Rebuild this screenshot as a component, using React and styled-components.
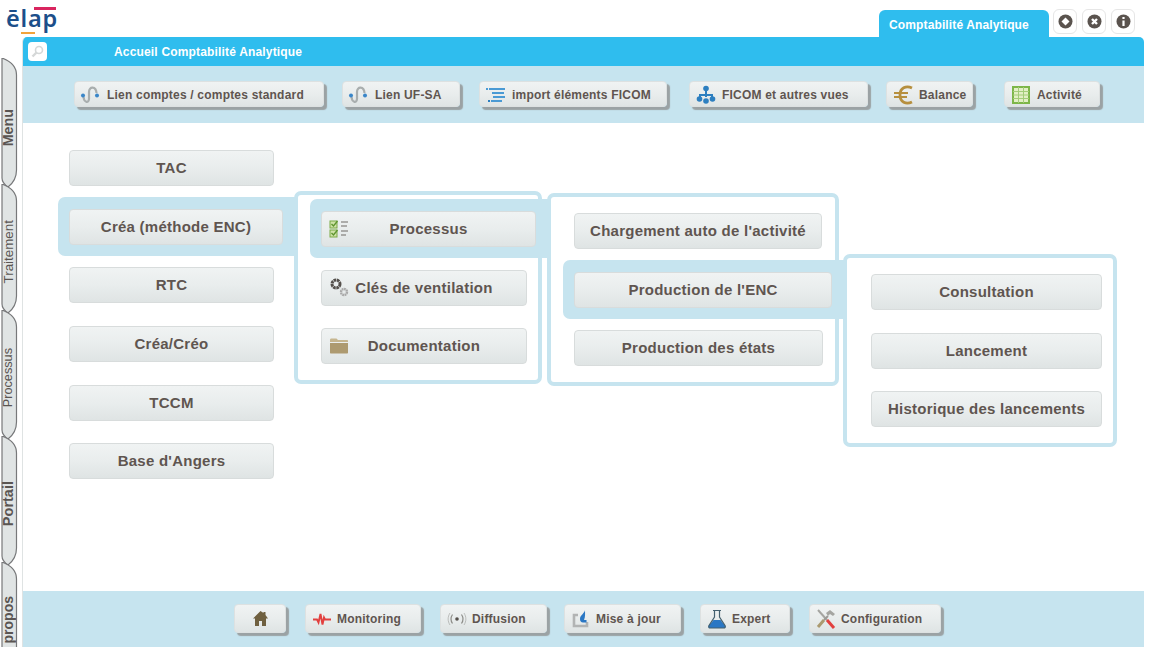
import React from 'react';
import styled, { createGlobalStyle } from 'styled-components';

const GlobalStyle = createGlobalStyle`
  html, body {
    margin: 0;
    padding: 0;
    background: #ffffff;
    height: 647px;
    overflow: hidden;
    font-family: "Liberation Sans", Arial, sans-serif;
  }
`;

const Page = styled.div`
  display: flex;
  width: 1156px;
  height: 647px;
  overflow: hidden;
`;

const Rail = styled.nav`
  width: 22px;
  flex: none;
  padding-top: 58px;
  display: flex;
  flex-direction: column;
`;

const RailTab = styled.div`
  position: relative;
  flex: none;
  height: 126px;
  width: 18px;
  box-sizing: border-box;
  margin-left: 1px;
  padding: ${(p) => p.$shift}px 3px 0 0;
  display: flex;
  align-items: center;
  justify-content: center;
  color: #5a5552;
  font-size: ${(p) => p.$size}px;
  font-weight: ${(p) => (p.$bold ? 700 : 400)};
`;

const RailShape = styled.svg`
  position: absolute;
  left: 0;
  top: 0;
  width: 18px;
  height: 132px;
`;

const RailLabel = styled.span`
  position: relative;
  writing-mode: vertical-rl;
  transform: rotate(180deg);
  white-space: nowrap;
  line-height: 15px;
`;

const Content = styled.div`
  width: 1122px;
  flex: none;
  display: flex;
  flex-direction: column;
`;

const Header = styled.header`
  height: 37px;
  display: flex;
  justify-content: space-between;
  align-items: flex-end;
`;

const Logo = styled.div`
  position: relative;
  align-self: flex-start;
  margin: 3px 0 0 -16px;
  color: #1c4f8a;
  font-family: "Noto Sans", sans-serif;
  font-size: 23.5px;
  font-weight: 600;
  line-height: 30px;
  letter-spacing: 0.8px;

  &::before {
    content: '';
    position: absolute;
    left: 28px;
    top: 4px;
    width: 22px;
    height: 3px;
    background: #d9255f;
  }

  &::after {
    content: '';
    position: absolute;
    left: 15px;
    top: 29px;
    width: 14px;
    height: 2px;
    background: #f2a33c;
  }
`;

const HeaderRight = styled.div`
  display: flex;
  align-items: flex-end;
`;

const ModuleTab = styled.div`
  width: 170px;
  height: 27px;
  box-sizing: border-box;
  padding: 8px 0 0 10px;
  background: #2fbdee;
  border-radius: 6px 6px 0 0;
  color: #ffffff;
  font-size: 12px;
  font-weight: 700;
  line-height: 14px;
  letter-spacing: 0.13px;
`;

const RoundButtons = styled.div`
  display: flex;
  gap: 5px;
  margin: 0 9px 3px 4px;
`;

const RoundButton = styled.div`
  width: 24px;
  height: 25px;
  box-sizing: border-box;
  border: 1px solid #e6e6e6;
  border-radius: 6px;
  display: flex;
  align-items: center;
  justify-content: center;
`;

const Main = styled.main`
  flex: 1;
  display: flex;
  flex-direction: column;
  border-left: 1px solid #dfe3e3;
  border-radius: 5px 5px 0 0;
  overflow: hidden;
`;

const TitleBar = styled.div`
  height: 29px;
  flex: none;
  background: #2fbdee;
  display: flex;
  align-items: center;
  padding-left: 5px;
`;

const SearchBox = styled.div`
  width: 19px;
  height: 19px;
  background: #ffffff;
  border-radius: 4px;
  display: flex;
  align-items: center;
  justify-content: center;
`;

const TitleText = styled.div`
  margin-left: 67px;
  color: #ffffff;
  font-size: 12px;
  font-weight: 700;
  letter-spacing: 0.17px;
`;

const ToolBar = styled.div`
  flex: none;
  height: ${(p) => p.$height}px;
  box-sizing: border-box;
  background: #c6e4ef;
  display: flex;
  align-items: flex-start;
  padding: ${(p) => p.$top}px 0 0 ${(p) => p.$left}px;
`;

const ToolButton = styled.div`
  width: ${(p) => p.$w}px;
  height: ${(p) => p.$h}px;
  margin-left: ${(p) => p.$gap || 0}px;
  padding-top: ${(p) => p.$pad || 0}px;
  flex: none;
  box-sizing: border-box;
  display: flex;
  align-items: center;
  justify-content: ${(p) => (p.$center ? 'center' : 'flex-start')};
  background: linear-gradient(#f0f3f3 0%, #e9eded 50%, #dfe4e4 100%);
  border: 1px solid #dde1e1;
  border-radius: 4px;
  box-shadow: 3px 3px 1px #9ba2a4;
  color: #5f5550;
  font-size: 12px;
  font-weight: 700;
  letter-spacing: 0.2px;
`;

const ToolIcon = styled.span`
  width: ${(p) => p.$w}px;
  flex: none;
  display: flex;
  align-items: center;
  justify-content: center;
`;

const Tree = styled.div`
  flex: 1;
  background: #ffffff;
  display: flex;
  align-items: flex-start;
  padding: 27px 0 0 46px;
`;

const MenuColumn = styled.div`
  width: 205px;
  flex: none;
  display: flex;
  flex-direction: column;
  gap: 22.7px;
`;

const Panel = styled.div`
  width: ${(p) => p.$w}px;
  height: 193px;
  flex: none;
  box-sizing: border-box;
  margin: ${(p) => p.$top}px 0 0 ${(p) => p.$left}px;
  padding: 16px 0 0 ${(p) => p.$pad}px;
  border: 4px solid #c6e4ef;
  border-radius: 7px;
  display: flex;
  flex-direction: column;
  gap: 22.7px;
  background: #ffffff;
`;

const Selected = styled.div`
  margin: -12px ${(p) => p.$reach}px -11px -11px;
  padding: 12px 0 11px 11px;
  background: #c6e4ef;
  border-radius: 7px 0 0 7px;
  position: relative;
  z-index: 1;
`;

const MenuButton = styled.div`
  width: ${(p) => p.$w || 205}px;
  height: 36px;
  box-sizing: border-box;
  padding-bottom: 1px;
  display: grid;
  grid-template-columns: 1fr auto 1fr;
  align-items: center;
  background: linear-gradient(#f0f3f3 0%, #e9eded 50%, #dfe4e4 100%);
  border: 1px solid #d8dcdc;
  border-radius: 4px;
  color: #5f5550;
  font-size: 15px;
  font-weight: 700;
  letter-spacing: 0.25px;
`;

const MenuIcon = styled.span`
  padding-left: 7px;
  display: flex;
`;

const Link = () => (
  <svg width="22" height="22" viewBox="0 0 22 22" fill="none">
    <path d="M3.500 13C4 18 8.500 20 9 15V8C9 2 16 2 16.500 9" stroke="#a9aeae" strokeWidth="2.200" />
    <circle cx="3" cy="11.500" r="2" fill="#3a86c8" />
    <circle cx="17" cy="11.500" r="2" fill="#3a86c8" />
  </svg>
);

const ListIcon = () => (
  <svg width="20" height="16" viewBox="0 0 20 16" fill="#4a9ad4">
    <rect x="0" y="1" width="2" height="2" />
    <rect x="3" y="1" width="16" height="2" />
    <rect x="6" y="5" width="12" height="2" />
    <rect x="7" y="9" width="12" height="2" />
    <rect x="2" y="13" width="2" height="2" fill="#2d7fc0" />
    <rect x="5" y="13" width="11" height="2" />
  </svg>
);

const HierarchyIcon = () => (
  <svg width="20" height="20" viewBox="0 0 20 20" fill="#2d7fc0">
    <circle cx="10" cy="3.500" r="2.800" />
    <path d="M9 6h2v3h6v3h-2v-1H11v1H9v-1H5v1H3V9h6z" />
    <circle cx="3.500" cy="14" r="2.800" />
    <circle cx="16.500" cy="14" r="2.800" />
    <circle cx="10" cy="16" r="2.800" />
  </svg>
);

const EuroIcon = () => (
  <svg width="22" height="22" viewBox="0 0 22 22" fill="none" stroke="#b68f3e" strokeWidth="2.800">
    <path d="M20 4C14 1 8 4 8 11s6 10 12 7" />
    <path d="M2 9h14M2 13h13" strokeWidth="2.200" />
  </svg>
);

const GridIcon = () => (
  <svg width="18" height="18" viewBox="0 0 18 18">
    <rect x="1" y="1" width="16" height="16" fill="#e2efc4" stroke="#7db648" strokeWidth="2" />
    <path d="M1 5.500h16M1 9h16M1 12.500h16M6.500 1v16M11.500 1v16" stroke="#a3cc78" strokeWidth="1" />
  </svg>
);

const ChecklistIcon = () => (
  <svg width="20" height="20" viewBox="0 0 20 20" fill="none">
    <rect x="1" y="2" width="7" height="7" fill="#cfe2a8" stroke="#7aa945" />
    <rect x="1" y="11" width="7" height="7" fill="#cfe2a8" stroke="#7aa945" />
    <path d="M2.500 5l2 2 4-5M2.500 14l2 2 4-5" stroke="#5f9530" strokeWidth="1.400" />
    <path d="M12 3h7M12 7h6M12 12h7M12 16h5" stroke="#6f6a66" strokeWidth="1" />
  </svg>
);

const GearsIcon = () => (
  <svg width="20" height="20" viewBox="0 0 20 20" fill="none">
    <circle cx="7" cy="7" r="4" stroke="#55504c" strokeWidth="3" strokeDasharray="2.600 0.600" />
    <circle cx="15" cy="15" r="3" stroke="#a9a9a9" strokeWidth="2.400" strokeDasharray="1.800 0.500" />
  </svg>
);

const FolderIcon = () => (
  <svg width="20" height="18" viewBox="0 0 20 18">
    <path d="M1 3c0-1 .5-1.500 1.500-1.500h5L9 3h9c.7 0 1 .3 1 1v1H1z" fill="#c6b690" />
    <path d="M1 6h18v9.500c0 .7-.4 1-1 1H2c-.6 0-1-.3-1-1z" fill="#ad9a70" />
  </svg>
);

const HomeIcon = () => (
  <svg width="17" height="17" viewBox="0 0 17 17" fill="#6f6040">
    <path d="M8.500 1L1 8.500h2V16h4v-5h3v5h4V8.500h2L13.500 5V2h-2v1z" />
  </svg>
);

const PulseIcon = () => (
  <svg width="20" height="14" viewBox="0 0 20 14" fill="none">
    <path d="M1 7.500h4l1.500 3 2-8.500 2 10.500 1.500-7 1 2h6" stroke="#e2403f" strokeWidth="1.900" />
  </svg>
);

const BroadcastIcon = () => (
  <svg width="20" height="14" viewBox="0 0 20 14" fill="none" stroke="#8c8c88" strokeWidth="1.200">
    <circle cx="10" cy="7" r="1.800" fill="#55504c" stroke="none" />
    <path d="M5.500 2.500c-2 3-2 6 0 9M14.500 2.500c2 3 2 6 0 9" />
    <path d="M3 1c-2.500 4-2.500 8 0 12M17 1c2.500 4 2.500 8 0 12" strokeWidth="0.500" />
  </svg>
);

const UpdateIcon = () => (
  <svg width="20" height="20" viewBox="0 0 20 20" fill="none">
    <path d="M7 6H3v11h13v-4" stroke="#b2b4b4" strokeWidth="2.600" />
    <path d="M14 1c0 3-5 5-5 9 0 2 1 3.500 3 3.500h3.500v-2.500H13c1.500-3 1-7 1-10z" fill="#2a77c4" />
  </svg>
);

const FlaskIcon = () => (
  <svg width="20" height="20" viewBox="0 0 20 20" fill="none">
    <path d="M6.500 11L1.500 17c-.5 1 0 2 1 2h15c1 0 1.500-1 1-2l-5-6z" fill="#2a77c4" />
    <path d="M6 1.500h8M7.500 1.500v6.500L2 16.500c-.6 1.200 0 2.500 1 2.500h14c1 0 1.600-1.300 1-2.500L12.500 8V1.500" stroke="#44606f" strokeWidth="1.200" />
  </svg>
);

const ToolsIcon = () => (
  <svg width="22" height="22" viewBox="0 0 22 22" fill="none">
    <path d="M3 2l9 10" stroke="#a5a5a1" strokeWidth="2" />
    <path d="M12 12l7 8" stroke="#e2403f" strokeWidth="3" />
    <path d="M13 8l-4 4" stroke="#9a9a96" strokeWidth="2" />
    <path d="M9 12l-6 7" stroke="#ab9a70" strokeWidth="3" />
    <path d="M11 5l4-3 5 4-2 2-3-2-2 2z" fill="#a5a5a1" />
  </svg>
);

const SearchGlyph = () => (
  <svg width="13" height="13" viewBox="0 0 13 13" fill="none" stroke="#d5d8d8" strokeWidth="1.600">
    <circle cx="8" cy="5" r="3.500" />
    <path d="M5.500 7.500L1.500 11.500" strokeWidth="2.400" />
  </svg>
);

const CircleGlyph = ({ children }) => (
  <svg width="15" height="15" viewBox="0 0 15 15">
    <circle cx="7.500" cy="7.500" r="7" fill="#5a534e" />
    {children}
  </svg>
);

const topButtons = [
  { label: 'Lien comptes / comptes standard', icon: <Link />, w: 250, gap: 0 },
  { label: 'Lien UF-SA', icon: <Link />, w: 118, gap: 18 },
  { label: 'import éléments FICOM', icon: <ListIcon />, w: 188, gap: 19 },
  { label: 'FICOM et autres vues', icon: <HierarchyIcon />, w: 179, gap: 22 },
  { label: 'Balance', icon: <EuroIcon />, w: 87, gap: 18 },
  { label: 'Activité', icon: <GridIcon />, w: 96, gap: 31 },
];

const bottomButtons = [
  { icon: <HomeIcon />, w: 52, gap: 0, center: true },
  { label: 'Monitoring', icon: <PulseIcon />, w: 116, gap: 19 },
  { label: 'Diffusion', icon: <BroadcastIcon />, w: 107, gap: 19 },
  { label: 'Mise à jour', icon: <UpdateIcon />, w: 117, gap: 17 },
  { label: 'Expert', icon: <FlaskIcon />, w: 90, gap: 19 },
  { label: 'Configuration', icon: <ToolsIcon />, w: 132, gap: 19 },
];

const railTabs = [
  { label: 'Menu', bold: true, size: 14.3, shift: 14 },
  { label: 'Traitement', size: 13.4, shift: 10 },
  { label: 'Processus', size: 12.7, shift: 10 },
  { label: 'Portail', bold: true, size: 14.5, shift: 10 },
  { label: 'À propos', bold: true, size: 14, shift: 4 },
];

const App = () => (
  <Page>
    <GlobalStyle />
    <Rail>
      {railTabs.map((tab) => (
        <RailTab key={tab.label} $bold={tab.bold} $size={tab.size} $shift={tab.shift}>
          <RailShape viewBox="0 0 18 132">
            <path
              d="M1 0C9 3 15.500 8 15.500 17V112C15.500 121 11 126 7 129C4 127 1 124 1 120Z"
              fill="#e0e4e4"
              stroke="#77787a"
              strokeWidth="1.200"
            />
          </RailShape>
          <RailLabel>{tab.label}</RailLabel>
        </RailTab>
      ))}
    </Rail>

    <Content>
      <Header>
        <Logo>ēlap</Logo>
        <HeaderRight>
          <ModuleTab>Comptabilité Analytique</ModuleTab>
          <RoundButtons>
            <RoundButton>
              <CircleGlyph>
                <path d="M7.500 3.500l4 4-4 4-4-4z" fill="#ffffff" />
              </CircleGlyph>
            </RoundButton>
            <RoundButton>
              <CircleGlyph>
                <path d="M5 5l5 5M10 5l-5 5" stroke="#ffffff" strokeWidth="2.400" />
              </CircleGlyph>
            </RoundButton>
            <RoundButton>
              <CircleGlyph>
                <path d="M7.500 3v2M7.500 6.500v5.500" stroke="#ffffff" strokeWidth="2.200" />
              </CircleGlyph>
            </RoundButton>
          </RoundButtons>
        </HeaderRight>
      </Header>

      <Main>
        <TitleBar>
          <SearchBox>
            <SearchGlyph />
          </SearchBox>
          <TitleText>Accueil Comptabilité Analytique</TitleText>
        </TitleBar>

        <ToolBar $height={57} $top={15} $left={51}>
          {topButtons.map((b) => (
            <ToolButton key={b.label} $w={b.w} $h={26} $gap={b.gap} $pad={2}>
              <ToolIcon $w={32}>{b.icon}</ToolIcon>
              {b.label}
            </ToolButton>
          ))}
        </ToolBar>

        <Tree>
          <MenuColumn>
            <MenuButton>
              <span />
              TAC
            </MenuButton>
            <Selected $reach={-22}>
              <MenuButton $w={214}>
                <span />
                Créa (méthode ENC)
              </MenuButton>
            </Selected>
            <MenuButton>
              <span />
              RTC
            </MenuButton>
            <MenuButton>
              <span />
              Créa/Créo
            </MenuButton>
            <MenuButton>
              <span />
              TCCM
            </MenuButton>
            <MenuButton>
              <span />
              Base d'Angers
            </MenuButton>
          </MenuColumn>

          <Panel $w={248} $top={41} $left={20} $pad={23}>
            <Selected $reach={-11}>
              <MenuButton $w={215}>
                <MenuIcon>
                  <ChecklistIcon />
                </MenuIcon>
                Processus
              </MenuButton>
            </Selected>
            <MenuButton $w={206}>
              <MenuIcon>
                <GearsIcon />
              </MenuIcon>
              Clés de ventilation
            </MenuButton>
            <MenuButton $w={206}>
              <MenuIcon>
                <FolderIcon />
              </MenuIcon>
              Documentation
            </MenuButton>
          </Panel>

          <Panel $w={292} $top={43} $left={5} $pad={23}>
            <MenuButton $w={248}>
              <span />
              Chargement auto de l'activité
            </MenuButton>
            <Selected $reach={-10}>
              <MenuButton $w={258}>
                <span />
                Production de l'ENC
              </MenuButton>
            </Selected>
            <MenuButton $w={249}>
              <span />
              Production des états
            </MenuButton>
          </Panel>

          <Panel $w={274} $top={104} $left={4} $pad={24}>
            <MenuButton $w={231}>
              <span />
              Consultation
            </MenuButton>
            <MenuButton $w={231}>
              <span />
              Lancement
            </MenuButton>
            <MenuButton $w={231}>
              <span />
              Historique des lancements
            </MenuButton>
          </Panel>
        </Tree>

        <ToolBar $height={56} $top={13} $left={211}>
          {bottomButtons.map((b) => (
            <ToolButton key={b.w} $w={b.w} $h={29} $gap={b.gap} $center={b.center}>
              <ToolIcon $w={b.center ? 20 : 31}>{b.icon}</ToolIcon>
              {b.label}
            </ToolButton>
          ))}
        </ToolBar>
      </Main>
    </Content>
  </Page>
);

export default App;
